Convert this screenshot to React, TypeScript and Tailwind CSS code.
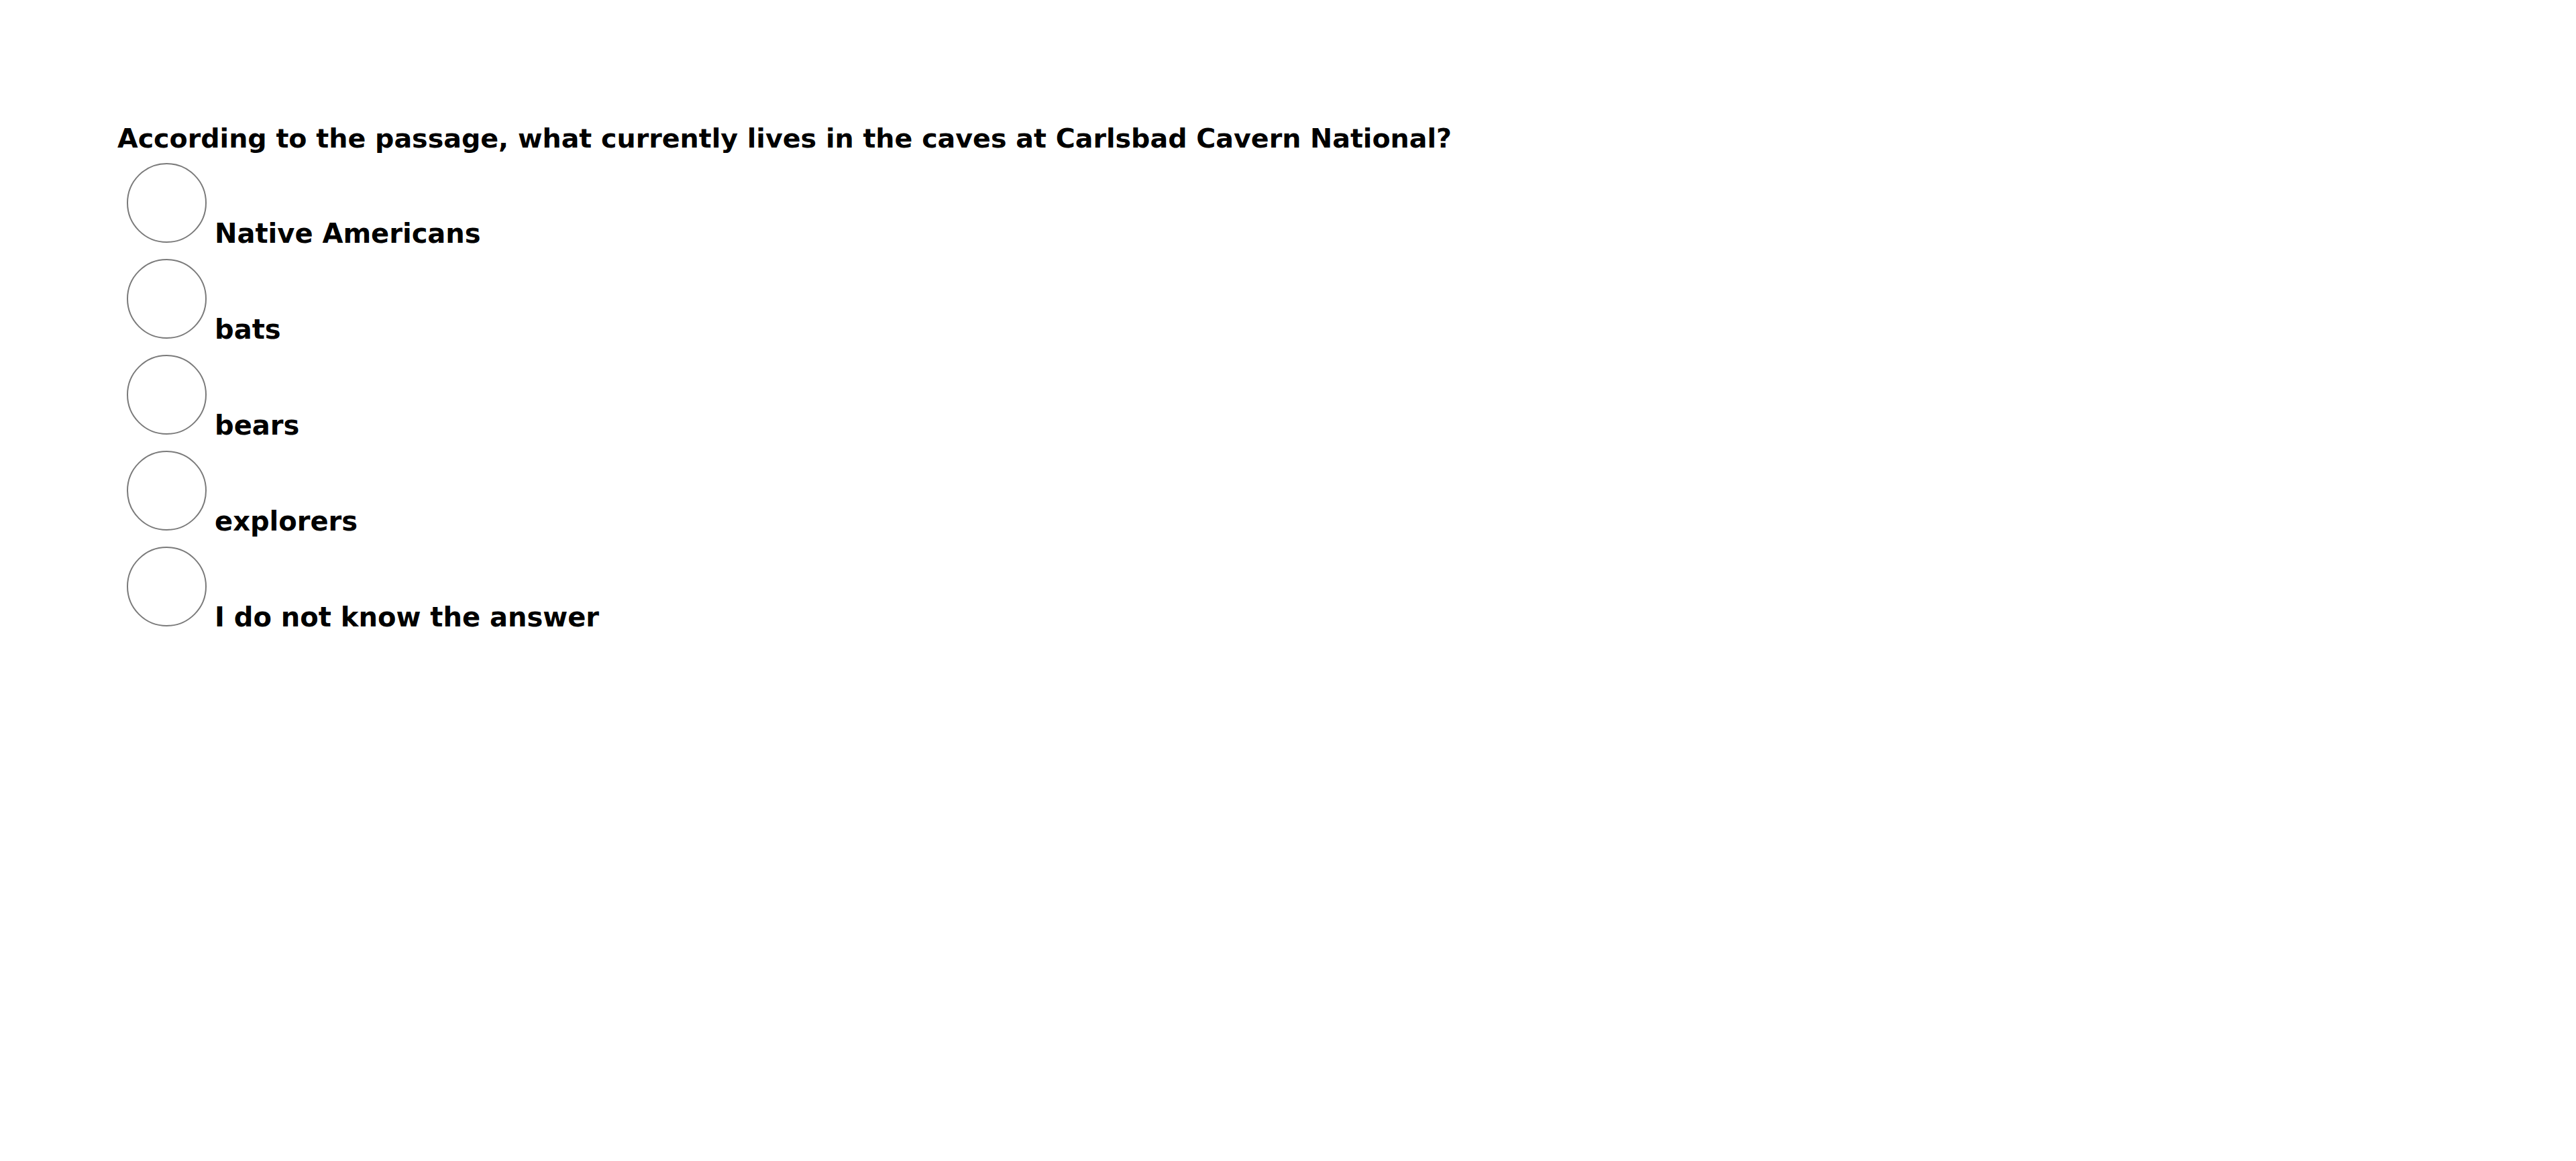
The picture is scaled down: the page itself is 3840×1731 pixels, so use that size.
import React, { useState } from 'react';

const options = [
  'Native Americans',
  'bats',
  'bears',
  'explorers',
  'I do not know the answer',
];

export default function App() {
  const [selected, setSelected] = useState<number | null>(null);

  return (
    <div
      className="min-h-screen bg-white pl-[175px] pt-[184px] text-black"
      style={{ fontFamily: '"DejaVu Sans", Verdana, sans-serif' }}
    >
      <p className="mb-[14px] text-[39.6px] font-bold leading-[45px]">
        According to the passage, what currently lives in the caves at Carlsbad Cavern National?
      </p>
      <div className="flex flex-col">
        {options.map((option, index) => (
          <label
            key={option}
            className="flex h-[143px] cursor-pointer items-baseline"
            onClick={() => setSelected(index)}
          >
            <span className="ml-[14px] flex h-[119px] w-[119px] shrink-0 items-center justify-center rounded-full border-2 border-[#7a7a7a]">
              {selected === index && <span className="h-[60px] w-[60px] rounded-full bg-[#555555]" />}
            </span>
            <span className="ml-[12px] text-[40px] font-bold leading-[46px]">{option}</span>
          </label>
        ))}
      </div>
    </div>
  );
}
